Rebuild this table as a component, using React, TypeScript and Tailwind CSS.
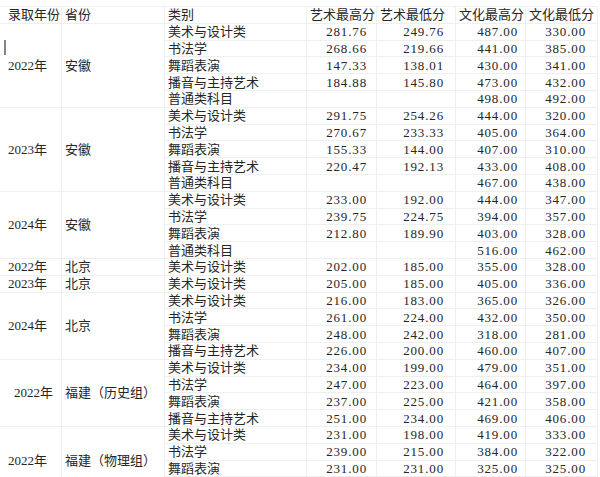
import React from 'react';

type Row = [string, string, string, string, string];
type Group = { year: string; prov: string; yearPad: string; rows: Row[]; extra?: boolean };

const groups: Group[] = [
  {
    year: '2022年', prov: '安徽', yearPad: 'pl-[8px]',
    rows: [
      ['美术与设计类', '281.76', '249.76', '487.00', '330.00'],
      ['书法学', '268.66', '219.66', '441.00', '385.00'],
      ['舞蹈表演', '147.33', '138.01', '430.00', '341.00'],
      ['播音与主持艺术', '184.88', '145.80', '473.00', '432.00'],
      ['普通类科目', '', '', '498.00', '492.00'],
    ],
  },
  {
    year: '2023年', prov: '安徽', yearPad: 'pl-[8px]',
    rows: [
      ['美术与设计类', '291.75', '254.26', '444.00', '320.00'],
      ['书法学', '270.67', '233.33', '405.00', '364.00'],
      ['舞蹈表演', '155.33', '144.00', '407.00', '310.00'],
      ['播音与主持艺术', '220.47', '192.13', '433.00', '408.00'],
      ['普通类科目', '', '', '467.00', '438.00'],
    ],
  },
  {
    year: '2024年', prov: '安徽', yearPad: 'pl-[8px]',
    rows: [
      ['美术与设计类', '233.00', '192.00', '444.00', '347.00'],
      ['书法学', '239.75', '224.75', '394.00', '357.00'],
      ['舞蹈表演', '212.80', '189.90', '403.00', '328.00'],
      ['普通类科目', '', '', '516.00', '462.00'],
    ],
  },
  {
    year: '2022年', prov: '北京', yearPad: 'pl-[8px]',
    rows: [['美术与设计类', '202.00', '185.00', '355.00', '328.00']],
  },
  {
    year: '2023年', prov: '北京', yearPad: 'pl-[8px]',
    rows: [['美术与设计类', '205.00', '185.00', '405.00', '336.00']],
  },
  {
    year: '2024年', prov: '北京', yearPad: 'pl-[8px]',
    rows: [
      ['美术与设计类', '216.00', '183.00', '365.00', '326.00'],
      ['书法学', '261.00', '224.00', '432.00', '350.00'],
      ['舞蹈表演', '248.00', '242.00', '318.00', '281.00'],
      ['播音与主持艺术', '226.00', '200.00', '460.00', '407.00'],
    ],
  },
  {
    year: '2022年', prov: '福建（历史组）', yearPad: 'pl-[14px]',
    rows: [
      ['美术与设计类', '234.00', '199.00', '479.00', '351.00'],
      ['书法学', '247.00', '223.00', '464.00', '397.00'],
      ['舞蹈表演', '237.00', '225.00', '421.00', '358.00'],
      ['播音与主持艺术', '251.00', '234.00', '469.00', '406.00'],
    ],
  },
  {
    year: '2022年', prov: '福建（物理组）', yearPad: 'pl-[8px]', extra: true,
    rows: [
      ['美术与设计类', '231.00', '198.00', '419.00', '333.00'],
      ['书法学', '239.00', '215.00', '384.00', '322.00'],
      ['舞蹈表演', '231.00', '231.00', '325.00', '325.00'],
    ],
  },
];

const line = 'border-[#efefef]';

function Num({ v, cls }: { v: string; cls: string }) {
  return (
    <div className={`flex items-center justify-end border-r border-b ${line} ${cls}`}>
      <span className="tracking-[0.85px]">{v}</span>
    </div>
  );
}

export default function App() {
  return (
    <div
      className="relative h-[477px] w-[600px] overflow-hidden bg-white pt-[6px] text-[13px] leading-none text-[#262626]"
      style={{ fontFamily: "'Liberation Serif', 'Noto Sans CJK SC', serif" }}
    >
      <div className={`flex w-[598px] flex-col border-t ${line}`}>
        {/* header */}
        <div className="flex h-[16.8px]">
          <div className={`flex w-[62px] items-center border-r border-b ${line} pl-[8px]`}>录取年份</div>
          <div className={`flex w-[103px] items-center border-r border-b ${line} pl-[3px]`}>省份</div>
          <div className={`flex w-[142px] items-center border-r border-b ${line} pl-[3px]`}>类别</div>
          <div className={`flex w-[70px] items-center border-r border-b ${line} pl-[3px]`}>艺术最高分</div>
          <div className={`flex w-[79px] items-center border-r border-b ${line} pl-[3px]`}>艺术最低分</div>
          <div className={`flex w-[70px] items-center border-r border-b ${line} pl-[3px]`}>文化最高分</div>
          <div className={`flex w-[72px] items-center border-r border-b ${line} pl-[3px]`}>文化最低分</div>
        </div>
        {groups.map((g, gi) => (
          <div key={gi} className="flex">
            <div className={`flex w-[62px] shrink-0 items-center border-r border-b ${line} ${g.yearPad}`}>{g.year}</div>
            <div className={`flex w-[103px] shrink-0 items-center border-r border-b ${line} pl-[3px]`}>{g.prov}</div>
            <div className="flex flex-col">
              {g.rows.map((r, ri) => (
                <div key={ri} className="flex h-[16.8px]">
                  <div className={`flex w-[142px] items-center border-r border-b ${line} pl-[3px]`}>{r[0]}</div>
                  <Num v={r[1]} cls="w-[70px] pr-[9px]" />
                  <Num v={r[2]} cls="w-[79px] pr-[11px]" />
                  <Num v={r[3]} cls="w-[70px] pr-[7px]" />
                  <Num v={r[4]} cls="w-[72px] pr-[11px]" />
                </div>
              ))}
              {g.extra && <div className="h-[16.8px] w-[433px]" />}
            </div>
          </div>
        ))}
      </div>
      <div className="absolute left-[4px] top-[40px] h-[15px] w-[1.5px] bg-[#7d8a7d]" />
    </div>
  );
}
